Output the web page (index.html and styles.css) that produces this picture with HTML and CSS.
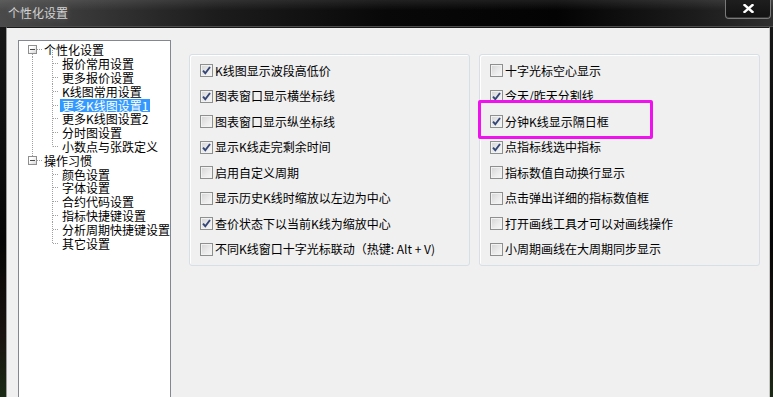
FILE: index.html
```html
<!DOCTYPE html>
<html lang="zh-CN">
<head>
<meta charset="utf-8">
<title>个性化设置</title>
<link rel="stylesheet" href="styles.css">
</head>
<body>
<div class="win">
  <div class="titlebar">
    <span class="title">个性化设置</span>
    <div class="close">
      <svg width="11" height="9" viewBox="0 0 11 9"><path d="M1.5 1 L9.5 8 M9.5 1 L1.5 8" stroke="#fff" stroke-width="2.4" stroke-linecap="square"/></svg>
    </div>
  </div>
  <div class="frame">
    <div class="client">
      <div class="tree">
        <ul class="roots">
          <li class="root first">
            <div class="rrow"><span class="exp"></span><span class="lbl">个性化设置</span></div>
            <ul class="kids">
              <li><span class="lbl">报价常用设置</span></li>
              <li><span class="lbl">更多报价设置</span></li>
              <li><span class="lbl">K线图常用设置</span></li>
              <li><span class="lbl sel">更多K线图设置1</span></li>
              <li><span class="lbl">更多K线图设置2</span></li>
              <li><span class="lbl">分时图设置</span></li>
              <li class="last"><span class="lbl">小数点与张跌定义</span></li>
            </ul>
          </li>
          <li class="root last">
            <div class="rrow"><span class="exp"></span><span class="lbl">操作习惯</span></div>
            <ul class="kids">
              <li><span class="lbl">颜色设置</span></li>
              <li><span class="lbl">字体设置</span></li>
              <li><span class="lbl">合约代码设置</span></li>
              <li><span class="lbl">指标快捷键设置</span></li>
              <li><span class="lbl">分析周期快捷键设置</span></li>
              <li class="last"><span class="lbl">其它设置</span></li>
            </ul>
          </li>
        </ul>
      </div>
      <div class="pages">
        <div class="group">
          <div class="row"><span class="cb on"></span><span class="txt">K线图显示波段高低价</span></div>
          <div class="row"><span class="cb on"></span><span class="txt">图表窗口显示横坐标线</span></div>
          <div class="row"><span class="cb"></span><span class="txt">图表窗口显示纵坐标线</span></div>
          <div class="row"><span class="cb on"></span><span class="txt">显示K线走完剩余时间</span></div>
          <div class="row"><span class="cb"></span><span class="txt">启用自定义周期</span></div>
          <div class="row"><span class="cb"></span><span class="txt">显示历史K线时缩放以左边为中心</span></div>
          <div class="row"><span class="cb on"></span><span class="txt">查价状态下以当前K线为缩放中心</span></div>
          <div class="row"><span class="cb"></span><span class="txt">不同K线窗口十字光标联动（热键: Alt + V)</span></div>
        </div>
        <div class="group">
          <div class="row"><span class="cb"></span><span class="txt">十字光标空心显示</span></div>
          <div class="row"><span class="cb on"></span><span class="txt">今天/昨天分割线</span></div>
          <div class="row marked"><span class="cb on"></span><span class="txt">分钟K线显示隔日框</span><span class="mark"></span></div>
          <div class="row"><span class="cb on"></span><span class="txt">点指标线选中指标</span></div>
          <div class="row"><span class="cb"></span><span class="txt">指标数值自动换行显示</span></div>
          <div class="row"><span class="cb"></span><span class="txt">点击弹出详细的指标数值框</span></div>
          <div class="row"><span class="cb"></span><span class="txt">打开画线工具才可以对画线操作</span></div>
          <div class="row"><span class="cb"></span><span class="txt">小周期画线在大周期同步显示</span></div>
        </div>
      </div>
    </div>
  </div>
</div>
</body>
</html>
```

FILE: styles.css
```css
* { box-sizing: border-box; }
html, body {
  margin: 0;
  padding: 0;
  width: 773px;
  height: 397px;
  overflow: hidden;
  background: #0a0a0a;
  font-family: "Noto Sans CJK SC", "Noto Sans", sans-serif;
  font-size: 12px;
  color: #000;
}
ul { list-style: none; margin: 0; padding: 0; }

.win {
  width: 773px;
  height: 397px;
  display: flex;
  flex-direction: column;
  background: linear-gradient(to bottom, #1a1a1a, #050505 60%, #1b1410 85%, #1a2a14);
}

.titlebar {
  height: 27px;
  flex: none;
  display: flex;
  align-items: flex-start;
  background:
    linear-gradient(to bottom, rgba(255,255,255,0.10), rgba(255,255,255,0) 40%),
    linear-gradient(to right, #4a4a4a 0, #363636 12%, #1c1c1c 28%, #080808 50%, #030303 72%, #1c1c1c 90%, #2e2e2e 100%);
  border-bottom: 1px solid #4c4c4c;
}
.title {
  padding-left: 8px;
  line-height: 26px;
  font-size: 12px;
  color: #d2d2d2;
  text-shadow: 0 0 6px rgba(255,255,255,0.25);
}
.close {
  margin-left: auto;
  margin-right: 2px;
  width: 46px;
  height: 19px;
  border: 1px solid #7a7a7a;
  border-top: none;
  border-radius: 0 0 4px 4px;
  background: linear-gradient(to bottom, #1e1e1e, #121212);
  box-shadow: inset 0 -1px 0 #3a3a3a;
  display: flex;
  align-items: center;
  justify-content: center;
}
.close svg { display: block; margin-top: -1px; }

.frame {
  flex: 1;
  display: flex;
  padding: 0 3px 0 6px;
  min-height: 0;
}
.client {
  flex: 1;
  display: flex;
  align-items: flex-start;
  background: #f0f0f0;
  border-top: 1px solid #1a1a1a;
  border-left: 1px solid #9c9c9c;
  border-right: 1px solid #c6c6c6;
  padding: 12px 0 0 11px;
  overflow: hidden;
  min-height: 0;
}

/* Tree */
.tree {
  flex: none;
  width: 153px;
  height: 400px;
  background: #fff;
  border: 1px solid #828790;
  padding-top: 2px;
}
.rrow, .kids li {
  height: 13.8px;
  display: flex;
  align-items: center;
  white-space: nowrap;
}
.lbl {
  display: inline-block;
  height: 13px;
  line-height: 13px;
  padding: 0 2px;
}
.lbl.sel { background: #3399ff; color: #fff; }
.exp {
  flex: none;
  width: 9px;
  height: 9px;
  margin-left: 9px;
  border: 1px solid #8f8f8f;
  background: linear-gradient(135deg, #ffffff 30%, #d6d6d6);
  position: relative;
}
.exp::after {
  content: "";
  position: absolute;
  left: 1px;
  top: 3px;
  width: 5px;
  height: 1px;
  background: #4a4a4a;
}
.rrow .lbl { margin-left: 5px; }

.rrow {
  --vd: repeating-linear-gradient(to bottom, #a0a0a0 0 1px, transparent 1px 2px);
  --hd: repeating-linear-gradient(to right, #a0a0a0 0 1px, transparent 1px 2px);
}
.root.first .rrow {
  background:
    repeating-linear-gradient(to right, #a0a0a0 0 1px, transparent 1px 2px) 18px 50% / 5px 1px no-repeat,
    repeating-linear-gradient(to bottom, #a0a0a0 0 1px, transparent 1px 2px) 13px 100% / 1px 50% no-repeat,
    repeating-linear-gradient(to bottom, #a0a0a0 0 1px, transparent 1px 2px) 33px 100% / 1px 50% no-repeat;
}
.root.last .rrow {
  background:
    repeating-linear-gradient(to right, #a0a0a0 0 1px, transparent 1px 2px) 18px 50% / 5px 1px no-repeat,
    repeating-linear-gradient(to bottom, #a0a0a0 0 1px, transparent 1px 2px) 13px 0 / 1px 50% no-repeat,
    repeating-linear-gradient(to bottom, #a0a0a0 0 1px, transparent 1px 2px) 33px 100% / 1px 50% no-repeat;
}
.root.first .kids {
  background: repeating-linear-gradient(to bottom, #a0a0a0 0 1px, transparent 1px 2px) 13px 0 / 1px 100% no-repeat;
}
.kids li {
  padding-left: 41px;
  background:
    repeating-linear-gradient(to right, #a0a0a0 0 1px, transparent 1px 2px) 34px 50% / 6px 1px no-repeat,
    repeating-linear-gradient(to bottom, #a0a0a0 0 1px, transparent 1px 2px) 33px 0 / 1px 100% no-repeat;
}
.kids li.last {
  background:
    repeating-linear-gradient(to right, #a0a0a0 0 1px, transparent 1px 2px) 34px 50% / 6px 1px no-repeat,
    repeating-linear-gradient(to bottom, #a0a0a0 0 1px, transparent 1px 2px) 33px 0 / 1px 50% no-repeat;
}

/* Pages */
.pages {
  display: flex;
  gap: 9px;
  margin-left: 18px;
  margin-top: 14px;
}
.group {
  width: 281px;
  height: 212px;
  border: 1px solid #d5dfe5;
  border-radius: 3px;
  box-shadow: inset 1px 1px 0 #fff;
  padding: 3px 0 3px 10px;
}
.row {
  height: 25.5px;
  display: flex;
  align-items: center;
  white-space: nowrap;
}
.txt {
  margin-left: 2px;
  line-height: 14px;
}
.cb {
  flex: none;
  width: 13px;
  height: 13px;
  border: 1px solid #8e8f8f;
  background: linear-gradient(135deg, #d4d4d4 0, #ececec 60%, #f7f7f7 100%);
  box-shadow: inset 0 0 0 1px #f2f2f2;
}
.cb.on {
  background:
    url("data:image/svg+xml;utf8,<svg xmlns='http://www.w3.org/2000/svg' width='11' height='11' viewBox='0 0 11 11'><path d='M2 5.6 L4.3 8.2 L9 2' fill='none' stroke='%23334677' stroke-width='1.9'/></svg>") center / 11px 11px no-repeat,
    linear-gradient(135deg, #d4d4d4 0, #ececec 60%, #f7f7f7 100%);
}
.row.marked { position: relative; }
.mark {
  position: absolute;
  left: -12px;
  top: -9px;
  width: 175px;
  height: 39px;
  border: 3px solid #f012ee;
  border-radius: 2px;
}
```
